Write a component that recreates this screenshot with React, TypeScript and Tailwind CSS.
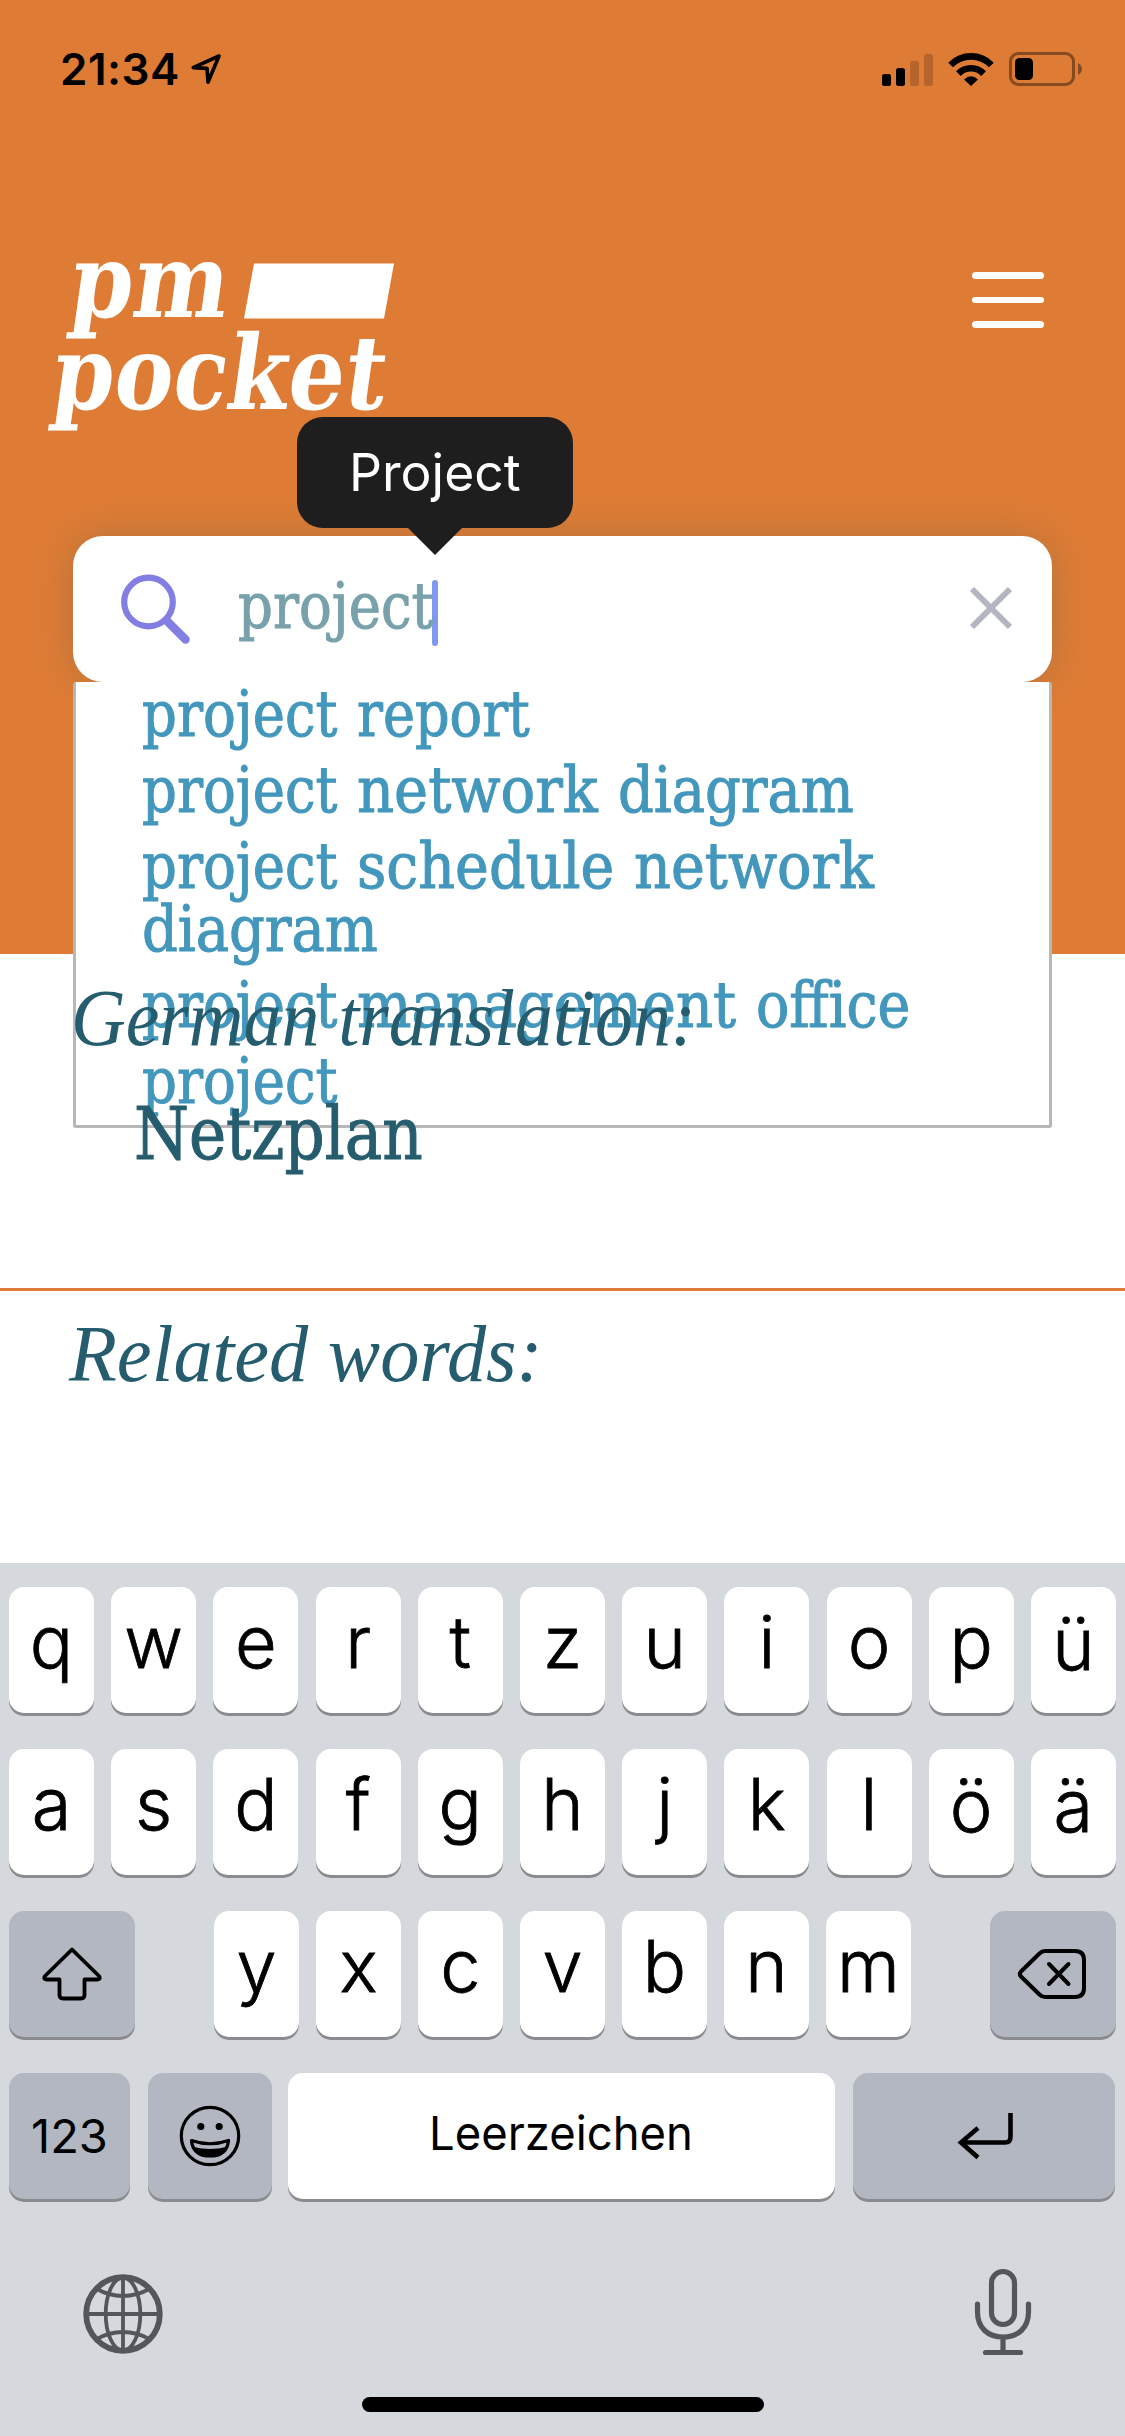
import { useLayoutEffect, useRef, useState, type ReactNode } from "react";

const SLAB = "font-['DejaVu_Serif_Condensed','DejaVu_Serif',serif]";
const THIN = "font-['Liberation_Serif',serif]";

/** A single line of text condensed horizontally so that it fills the given width. */
function FitText({ width, className = "", children }: { width: number; className?: string; children: ReactNode }) {
  const ref = useRef<HTMLSpanElement>(null);
  const [scale, setScale] = useState(1);
  useLayoutEffect(() => {
    if (ref.current) setScale(width / ref.current.offsetWidth);
  }, [width]);
  return (
    <span className={`block ${className}`}>
      <span ref={ref} className="inline-block origin-left whitespace-nowrap align-top" style={{ transform: `scaleX(${scale})` }}>
        {children}
      </span>
    </span>
  );
}

function StatusBar() {
  return (
    <div className="flex h-[138px] items-center justify-between pr-[42px] pl-[60px]">
      <div className="flex items-center">
        <span className="text-[44px] leading-none font-semibold tracking-[0.5px] text-black">21:34</span>
        <svg className="mt-[-1px] ml-[10px]" width="32" height="32" viewBox="0 0 32 32" fill="none" stroke="#000" strokeWidth="3.6" strokeLinejoin="round">
          <path d="M29 3 L3.2 14.6 L17 15.400 L18 29.2 Z" />
        </svg>
      </div>
      <div className="flex items-center">
        <svg width="51" height="33" viewBox="0 0 51 33">
          <rect x="0" y="21" width="9" height="12" rx="2.5" />
          <rect x="14" y="15" width="9" height="18" rx="2.5" />
          <rect x="28" y="8" width="9" height="25" rx="2.5" fill="#b6642c" />
          <rect x="42" y="1" width="9" height="32" rx="2.5" fill="#b6642c" />
        </svg>
        <svg className="ml-[15px]" width="46" height="33" viewBox="0 0 46 33" fill="none" stroke="#000" strokeWidth="6.6">
          <path d="M2.6 12 A28.5 28.5 0 0 1 43.4 12" />
          <path d="M10.4 20.6 A17.5 17.5 0 0 1 35.6 20.6" />
          <path d="M16 26.5 Q23 20 30 26.5 L23 33 Z" fill="#000" stroke="none" />
        </svg>
        <svg className="ml-[15px]" width="74" height="34" viewBox="0 0 74 34">
          <rect x="1.5" y="1.5" width="63" height="31" rx="8" fill="none" stroke="#864a20" strokeWidth="3" />
          <rect x="6" y="6" width="18" height="22" rx="4.5" />
          <path d="M69 11 Q73 13.500 73 17 Q73 20.500 69 23 Z" fill="#864a20" />
        </svg>
      </div>
    </div>
  );
}

function Logo() {
  return (
    <div className={`${SLAB} text-[103px] leading-[92px] font-bold text-white`}>
      <div className="flex items-start pl-[72px]">
        <FitText width={158} className="w-[161px] -skew-x-[8deg]">pm</FitText>
        <svg className="mt-[28px] ml-[10px]" width="152" height="56" viewBox="0 0 152 56">
          <path d="M11 0.500 H151 L141 55.500 H1 Z" fill="#fff" />
        </svg>
      </div>
      <FitText width={333} className="ml-[54px] w-[333px] -skew-x-[8deg]">pocket</FitText>
    </div>
  );
}

function SearchBox() {
  return (
    <div className="relative mx-[73px] h-[146px]">
      <div className="flex h-full items-center rounded-[30px] bg-white shadow-[0_0_38px_rgba(70,90,80,0.26)]">
        <svg className="mt-[-2px] ml-[47px]" width="72" height="72" viewBox="0 0 72 72" fill="none" stroke="#827ee2" strokeLinecap="round">
          <circle cx="28.500" cy="30" r="24.300" strokeWidth="6.200" />
          <path d="M47 49 L65.500 67.500" strokeWidth="8.500" />
        </svg>
        <div className="mt-[-7px] ml-[46px] flex items-center">
          <FitText width={195} className={`${SLAB} w-[194px] text-[64px] leading-[64px] text-[#78a1ab] [-webkit-text-stroke:1px]`}>project</FitText>
          <span className="mt-[15px] h-[66px] w-[6px] shrink-0 rounded-full bg-[#8198f0]" />
        </div>
        <svg className="mt-[-3px] mr-[39px] ml-auto" width="44" height="44" viewBox="0 0 44 44" fill="none" stroke="#b3b5c3" strokeWidth="6">
          <path d="M3 3 L41 41 M41 3 L3 41" />
        </svg>
      </div>
      <div className="absolute top-[-119px] left-[224px] flex h-[111px] w-[276px] items-center justify-center rounded-[26px] bg-[#1e1e1e]">
        <FitText width={172} className="w-[172px] text-[52px] leading-none text-white">Project</FitText>
        <svg className="absolute top-[110px] left-[110px]" width="56" height="28" viewBox="0 0 56 28">
          <path d="M0 0 H56 L28 28 Z" fill="#1e1e1e" />
        </svg>
      </div>
      <Suggestions />
    </div>
  );
}

type Word = [text: string, width: number];

/** Each suggestion is a list of lines, each line a list of words. */
const suggestions: Word[][][] = [
  [[["project", 195], ["report", 173]]],
  [[["project", 195], ["network", 241], ["diagram", 236]]],
  [[["project", 195], ["schedule", 257], ["network", 240]], [["diagram", 236]]],
  [[["project", 195], ["management", 379], ["office", 154]]],
  [[["project", 195]]],
];

function Suggestions() {
  return (
    <ul className={`${SLAB} absolute top-full left-0 w-full rounded-[3px] border-x-[3px] border-b-[3px] border-[#b7b7b7] bg-white pt-px pl-[66px] text-[64px] leading-[63px] text-[#4397bc] [-webkit-text-stroke:1px]`}>
      {suggestions.map((lines, i) => (
        <li key={i} className="pb-[13px] last:pb-[12px]">
          {lines.map((words, j) => (
            <div key={j} className="flex gap-[20px]">
              {words.map(([text, width]) => (
                <div key={text} className="shrink-0" style={{ width }}>
                  <FitText width={width}>{text}</FitText>
                </div>
              ))}
            </div>
          ))}
        </li>
      ))}
    </ul>
  );
}

function Key({ label }: { label: string }) {
  const umlaut = "üöä".includes(label);
  return (
    <div className="h-[126px] w-[85px] rounded-[15px] bg-white text-center text-[72px] leading-[110px] font-light text-black shadow-[0_3px_0_#8a8b8f] [-webkit-text-stroke:0.8px]">
      <span className={umlaut ? "relative top-[2px]" : ""}>{label}</span>
    </div>
  );
}

function DarkKey({ className, children }: { className: string; children: ReactNode }) {
  return (
    <div className={`flex h-[126px] items-center justify-center rounded-[15px] bg-[#b3b7c1] shadow-[0_3px_0_#8a8b8f] ${className}`}>
      {children}
    </div>
  );
}

function Keyboard() {
  return (
    <div className="h-[873px] bg-[#d5d8dd] px-[9px] pt-[24px]">
      <div className="flex flex-col gap-[36px]">
        <div className="flex justify-between">
          {"qwertzuiopü".split("").map((k) => <Key key={k} label={k} />)}
        </div>
        <div className="flex justify-between">
          {"asdfghjklöä".split("").map((k) => <Key key={k} label={k} />)}
        </div>
        <div className="flex justify-between">
          <DarkKey className="w-[126px]">
            <svg width="60" height="54" viewBox="0 0 60 54" fill="none" stroke="#000" strokeWidth="3.800" strokeLinejoin="round">
              <path d="M30 2.500 L57 29 Q59 32.500 55.500 32.500 H42.500 V48 Q42.500 51.500 39 51.500 H21 Q17.500 51.500 17.500 48 V32.500 H4.500 Q1 32.500 3 29 Z" />
            </svg>
          </DarkKey>
          <div className="flex w-[697px] justify-between">
            {"yxcvbnm".split("").map((k) => <Key key={k} label={k} />)}
          </div>
          <DarkKey className="w-[126px]">
            <svg className="mr-[2px]" width="70" height="52" viewBox="0 0 70 52" fill="none" stroke="#000" strokeWidth="4" strokeLinecap="round" strokeLinejoin="round">
              <path d="M28 3 H58 Q67 3 67 12 V40 Q67 49 58 49 H28 Q25 49 22.500 46.500 L4 28.500 Q1.500 26 4 23.500 L22.500 5.500 Q25 3 28 3 Z" />
              <path d="M32 16 L51.500 36 M51.500 16 L32 36" />
            </svg>
          </DarkKey>
        </div>
        <div className="flex text-[47px] leading-none text-black">
          <DarkKey className="w-[121px] pb-[2px]">123</DarkKey>
          <DarkKey className="ml-[18px] w-[124px]">
            <svg width="62" height="62" viewBox="0 0 62 62" fill="none" stroke="#000" strokeWidth="3.200">
              <circle cx="31" cy="31" r="28.700" />
              <circle cx="21.800" cy="21.500" r="3.600" fill="#000" stroke="none" />
              <circle cx="40.200" cy="21.500" r="3.600" fill="#000" stroke="none" />
              <path d="M12.500 35.500 Q31 42 49.500 35.500 Q48 51 31 51 Q14 51 12.500 35.500 Z" strokeLinejoin="round" />
              <path d="M14.500 42 Q31 46 47.500 42 Q43 52 31 52 Q19 52 14.500 42 Z" fill="#000" stroke="none" />
            </svg>
          </DarkKey>
          <div className="ml-[16px] flex h-[126px] w-[547px] items-center justify-center rounded-[15px] bg-white pb-[8px] shadow-[0_3px_0_#8a8b8f]">
            <FitText width={264} className="w-[265px]">Leerzeichen</FitText>
          </div>
          <DarkKey className="ml-[18px] w-[262px] pl-[3px]">
            <svg width="58" height="48" viewBox="0 0 58 48" fill="none" stroke="#000" strokeWidth="4.600">
              <path d="M53.500 1 V25 Q53.500 30.500 48 30.500 H4" />
              <path d="M21 16 L4 30.500 L21 45.500" />
            </svg>
          </DarkKey>
        </div>
      </div>
      <div className="mt-[66px] flex items-start justify-between pr-[84px] pl-[74px]">
        <svg className="mt-[9px]" width="80" height="80" viewBox="0 0 80 80" fill="none" stroke="#53565b" strokeWidth="3.800">
          <circle cx="40" cy="40" r="36.800" strokeWidth="5.800" />
          <ellipse cx="40" cy="40" rx="17.300" ry="36.500" />
          <path d="M40 3 V77 M3 40 H77 M14 15 Q26 22 40 22 Q54 22 66 15 M14 65 Q26 58 40 58 Q54 58 66 65" />
        </svg>
        <svg className="mt-[3px]" width="58" height="90" viewBox="0 0 58 90" fill="none" stroke="#53565b" strokeWidth="5.200" strokeLinecap="round">
          <rect x="17.500" y="3.500" width="23" height="53" rx="11.500" />
          <path d="M3.500 36 V44 C3.500 60 14 69 29 69 C44 69 54.500 60 54.500 44 V36 M29 69 V84 M11.500 84.500 H46.500" />
        </svg>
      </div>
      <div className="mx-auto mt-[39px] h-[15px] w-[402px] rounded-full bg-black" />
    </div>
  );
}

export default function App() {
  return (
    <div className="flex h-[2436px] w-[1125px] flex-col overflow-hidden bg-white font-['Inter',sans-serif]">
      <header className="h-[954px] shrink-0 bg-[#de7c35]">
        <StatusBar />
        <div className="flex h-[398px] items-start justify-between pr-[81px]">
          <div className="pt-[97px]">
            <Logo />
          </div>
          <div className="mt-[134px] flex w-[72px] flex-col gap-[18px]">
            <span className="h-[6.500px] rounded-full bg-white" />
            <span className="h-[6.500px] rounded-full bg-white" />
            <span className="h-[6.500px] rounded-full bg-white" />
          </div>
        </div>
        <SearchBox />
      </header>
      <main className="relative h-[609px] shrink-0 text-[#265d6e]">
        <FitText width={625} className={`${THIN} pl-[71px] text-[80px] leading-[128px] italic`}>German translation:</FitText>
        <FitText width={289} className={`${SLAB} pl-[134px] text-[72px] leading-[104px] [-webkit-text-stroke:1px]`}>Netzplan</FitText>
        <hr className="mt-[102px] border-0 border-t-[3px] border-[#df7b38]" />
        <FitText width={474} className={`${THIN} pl-[69px] text-[80px] leading-[126px] italic`}>Related words:</FitText>
      </main>
      <Keyboard />
    </div>
  );
}
